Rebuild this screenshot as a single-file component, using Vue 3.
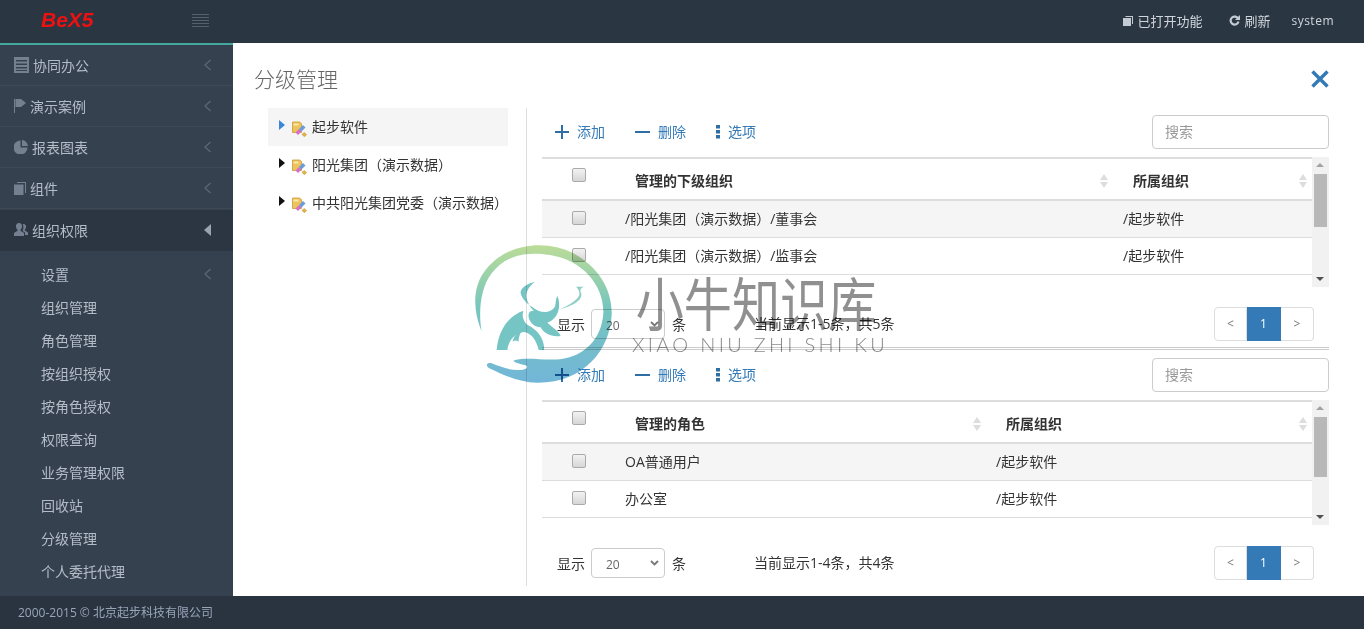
<script setup>
const menus = [
  { name: '协同办公', w: 15, h: 16, box: '0 0 15 16', d: 'M0 0h15v16H0zM2 3v1.500h11V3zM2 6.500V8h11V6.500zM2 10v1.500h11V10zM2 13v1h11v-1z' },
  { name: '演示案例', w: 12, h: 14, box: '0 0 12 14', d: 'M0 0h1v14H0zM1.500 0h5.500l5 4-5 4H1.500z' },
  { name: '报表图表', w: 14, h: 14, box: '0 0 14 14', d: 'M6.500 0.500v7h7a7 7 0 1 1-7-7zM8 0a6.500 6.500 0 0 1 6 6H8z' },
  { name: '组件', w: 12, h: 13, box: '0 0 12 13', d: 'M3 0h9v11h-1V1H3zM0 2.500h9.500V13H0z' },
  { name: '组织权限', w: 14, h: 13, box: '0 0 14 13', d: 'M5 0a3 3 0 0 1 3 3.500c0 1.500-.8 2.700-1.500 3.300v1L10 10v3H0v-3l3.500-2.200v-1C2.800 6.200 2 5 2 3.500A3 3 0 0 1 5 0zM9.500 1a2.500 2.500 0 0 1 2.500 3c0 1.200-.6 2.200-1.200 2.700v.8L14 9.500V12h-3V9.500L8.500 8c.5-.8 1-2.500.8-4.500 0-1-.2-1.800-.6-2.300z', active: true }
]
const subMenus = ['设置', '组织管理', '角色管理', '按组织授权', '按角色授权', '权限查询', '业务管理权限', '回收站', '分级管理', '个人委托代理']
const treeNodes = [
  { name: '起步软件', selected: true },
  { name: '阳光集团（演示数据）' },
  { name: '中共阳光集团党委（演示数据）' }
]
const panels = [
  {
    columns: '73px 498px 1fr',
    title: '管理的下级组织',
    rows: [
      ['/阳光集团（演示数据）/董事会', '/起步软件'],
      ['/阳光集团（演示数据）/监事会', '/起步软件']
    ],
    tableHeight: 130,
    thumb: 53,
    footTop: 20,
    status: '当前显示1-5条，共5条'
  },
  {
    columns: '73px 371px 1fr',
    title: '管理的角色',
    rows: [
      ['OA普通用户', '/起步软件'],
      ['办公室', '/起步软件']
    ],
    tableHeight: 125,
    thumb: 60,
    footTop: 21,
    status: '当前显示1-4条，共4条'
  }
]
</script>

<template>
  <div class="page">
    <header class="topbar">
      <div class="brand">
        <span class="logo">BeX5</span>
        <svg class="burger" width="17" height="14" viewBox="0 0 17 14">
          <path d="M0 .5h17M0 3.500h17M0 6.500h17M0 9.500h17M0 12.500h17" stroke="#56606e" fill="none" />
        </svg>
      </div>
      <nav class="top-actions">
        <span class="top-link">
          <svg width="10" height="10" viewBox="0 0 10 10"><path fill="#c3cad3" d="M2.500 0H10v8H9V1H2.500zM0 2h8v8H0z" /></svg>
          已打开功能
        </span>
        <span class="top-link second">
          <svg width="11" height="11" viewBox="0 0 11 11"><path fill="none" stroke="#c3cad3" stroke-width="2.200" d="M9.300 4A4 4 0 1 0 9.500 6.500" /><path fill="#c3cad3" d="M11 0v5H6z" /></svg>
          刷新
        </span>
        <span class="user">system</span>
      </nav>
    </header>

    <div class="middle">
      <aside class="sidebar">
        <div v-for="m in menus" :key="m.name" class="menu-item" :class="{ active: m.active }">
          <svg class="menu-icon" :width="m.w" :height="m.h" :viewBox="m.box"><path fill-rule="evenodd" :d="m.d" /></svg>
          <span class="menu-text">{{ m.name }}</span>
          <svg v-if="m.active" class="chev" width="7" height="12" viewBox="0 0 7 12"><path fill="#9aa4b0" d="M7 0v12L0 6z" /></svg>
          <svg v-else class="chev" width="7" height="12" viewBox="0 0 7 12"><path fill="none" stroke="#5d6977" stroke-width="1.200" d="M6.500 1 1 6l5.500 5" /></svg>
        </div>
        <div class="submenu">
          <div v-for="(s, i) in subMenus" :key="s" class="sub-item">
            <span>{{ s }}</span>
            <svg v-if="i === 0" class="chev" width="7" height="12" viewBox="0 0 7 12"><path fill="none" stroke="#5d6977" stroke-width="1.200" d="M6.500 1 1 6l5.500 5" /></svg>
          </div>
        </div>
      </aside>

      <main class="content">
        <div class="title-row">
          <h1 class="title">分级管理</h1>
          <svg width="18" height="18" viewBox="0 0 18 18"><path d="M1.500 1.500l15 15M16.500 1.500l-15 15" stroke="#337ab7" stroke-width="3.400" fill="none" /></svg>
        </div>

        <div class="workspace">
          <ul class="tree">
            <li v-for="n in treeNodes" :key="n.name" class="tree-node" :class="{ selected: n.selected }">
              <svg class="arrow" width="6" height="10" viewBox="0 0 6 10"><path d="M0 0l6 5-6 5z" /></svg>
              <svg class="tree-icon" width="15" height="16" viewBox="0 0 15 16">
                <path fill="#eec25c" stroke="#c99a35" stroke-width=".8" d="M.5 1h7l2 1.500V11.500H.5z" />
                <path fill="#fbe9a8" d="M1.500 2.500h5v2h-5z" />
                <path fill="#d76fc6" d="M3.500 11.500 7 8l2.500 2.500L6 14z" />
                <path fill="#6d9ad8" d="M7 8l4-4 2.500 2.500-4 4z" />
                <path fill="#e6b13c" stroke="#b98a28" stroke-width=".5" d="M10 13.500l2-2 2.500 2-2 2.300z" />
              </svg>
              <span>{{ n.name }}</span>
            </li>
          </ul>

          <div class="grids">
            <section v-for="(p, pi) in panels" :key="p.title" class="panel">
              <div class="toolbar">
                <a class="tool">
                  <svg width="14" height="14" viewBox="0 0 14 14"><path d="M7 0v14M0 7h14" stroke="#2f6ea5" stroke-width="2" fill="none" /></svg>
                  <span>添加</span>
                </a>
                <a class="tool">
                  <svg width="15" height="14" viewBox="0 0 15 14"><path d="M0 7h15" stroke="#2f6ea5" stroke-width="2" fill="none" /></svg>
                  <span>删除</span>
                </a>
                <a class="tool">
                  <svg width="4" height="14" viewBox="0 0 4 14"><path fill="#2f6ea5" d="M0 0h4v3.500H0zM0 5h4v3.500H0zM0 10h4v3.500H0z" /></svg>
                  <span>选项</span>
                </a>
                <div class="search">搜索</div>
              </div>

              <div class="table-wrap" :style="{ height: p.tableHeight + 'px' }">
                <div class="table">
                  <div class="thead" :style="{ gridTemplateColumns: p.columns }">
                    <div class="cell-check head-check"><i class="check"></i></div>
                    <div class="th">
                      <span>{{ p.title }}</span>
                      <i class="sort"></i>
                    </div>
                    <div class="th">
                      <span>所属组织</span>
                      <i class="sort"></i>
                    </div>
                  </div>
                  <div v-for="(r, ri) in p.rows" :key="r[0]" class="tr" :class="{ odd: ri === 0 }" :style="{ gridTemplateColumns: p.columns }">
                    <div class="cell-check"><i class="check"></i></div>
                    <div class="td">{{ r[0] }}</div>
                    <div class="td">{{ r[1] }}</div>
                  </div>
                </div>
                <div class="scrollbar">
                  <i class="sb-up"></i>
                  <div class="sb-thumb" :style="{ height: p.thumb + 'px' }"></div>
                  <i class="sb-down"></i>
                </div>
              </div>

              <div class="grid-foot" :style="{ paddingTop: p.footTop + 'px' }">
                <span>显示</span>
                <div class="select">
                  <span>20</span>
                  <svg width="9" height="6" viewBox="0 0 9 6"><path d="M1 1 4.500 4.500 8 1" stroke="#777" stroke-width="1.800" fill="none" /></svg>
                </div>
                <span>条</span>
                <span class="status">{{ p.status }}</span>
                <div class="pager">
                  <span class="pg">&lt;</span>
                  <span class="pg on">1</span>
                  <span class="pg">&gt;</span>
                </div>
              </div>
              <div v-if="pi === 0" class="divider"></div>
            </section>
          </div>
        </div>
      </main>
    </div>

    <footer class="footer">2000-2015 © 北京起步科技有限公司</footer>

    <div class="watermark">
      <svg width="150" height="150" viewBox="0 0 450 450">
        <defs>
          <linearGradient id="wm" x1="0" y1="0" x2="0" y2="1">
            <stop offset="0" stop-color="#bcdc98" />
            <stop offset=".45" stop-color="#77c6bd" />
            <stop offset="1" stop-color="#72b6d8" />
          </linearGradient>
        </defs>
        <path fill="url(#wm)" d="M35 275C5 200 5 120 70 65 130 10 235 0 310 40c75 40 118 110 115 185-5 105-85 205-225 203-50 0-100-23-142-43-13-7-8-20 7-15 25 10 55 22 85 20 20-2 28-10 15-15-15-3-30-7-35-13 30-12 90 0 140-4 70-8 125-58 130-138 3-80-60-160-160-175C150 32 100 55 65 100 30 145 25 220 35 275z" />
        <path fill="#76c5c5" d="M195 125C168 132 150 145 152 160C156 180 180 200 205 212C225 220 245 215 255 200C258 190 256 178 262 168C270 185 270 210 258 228C250 240 240 245 232 248C248 262 268 275 272 288C245 292 222 282 212 262C195 262 180 250 176 232C174 218 180 210 192 214C178 200 165 175 170 160C172 148 182 135 195 125Z" />
        <path fill="#76c5c5" d="M160 212C115 228 85 270 80 330L112 330C116 300 135 280 160 276C186 278 200 305 206 330L222 330C225 300 205 270 172 254C160 245 155 228 160 212Z" />
        <path fill="#76c5c5" d="M128 305C130 290 140 278 155 272C148 285 145 295 146 305C140 300 134 300 128 305Z" />
        <path fill="#8fcfc5" d="M318 140L342 140C332 143 328 150 334 160C338 185 300 200 265 210C290 198 320 185 328 165C330 155 325 147 318 140Z" />
      </svg>
      <div class="wm-text">
        <div class="wm-cn">小牛知识库</div>
        <div class="wm-en">XIAO NIU ZHI SHI KU</div>
      </div>
    </div>
  </div>
</template>

<style scoped>
.page {
  position: relative;
  display: flex;
  flex-direction: column;
  height: 629px;
  overflow: hidden;
  font-family: "Open Sans", "Noto Sans CJK SC", sans-serif;
  font-size: 14px;
  color: #333;
  background: #fff;
  text-spacing-trim: space-all;
}

.topbar {
  display: flex;
  justify-content: space-between;
  align-items: center;
  height: 43px;
  flex: none;
  background: #2b3643;
}

.brand {
  display: flex;
  align-items: center;
  width: 233px;
  padding-left: 41px;
  box-sizing: border-box;
}

.logo {
  width: 151px;
  font-family: "Liberation Sans", sans-serif;
  font-size: 21px;
  font-weight: bold;
  font-style: italic;
  color: #ee1111;
  margin-top: -4px;
}

.burger {
  margin-top: -1px;
}

.top-actions {
  display: flex;
  align-items: center;
  padding-right: 30px;
  padding-bottom: 2px;
  color: #d0d5dc;
  font-size: 13px;
}

.top-link {
  display: flex;
  align-items: center;
  gap: 4px;
}

.second {
  margin-left: 27px;
}

.user {
  margin-left: 21px;
  font-size: 12px;
  letter-spacing: .5px;
}

.middle {
  display: flex;
  flex: 1;
  min-height: 0;
}

.sidebar {
  width: 233px;
  flex: none;
  background: #364150;
  border-top: 2px solid #44a89f;
  box-sizing: border-box;
  color: #b4bcc8;
}

.menu-item {
  display: flex;
  align-items: center;
  height: 40px;
  padding: 0 22px 0 14px;
  border-bottom: 1px solid #3d4957;
}

.menu-item.active {
  height: 41px;
  box-sizing: border-box;
  padding-bottom: 2px;
  margin-top: 1px;
  background: #2c3542;
  border-bottom: 0;
}

.menu-icon {
  fill: #74808f;
  margin-right: 4px;
  flex: none;
}

.menu-text {
  flex: 1;
}

.submenu {
  padding-top: 6px;
}

.sub-item {
  display: flex;
  justify-content: space-between;
  align-items: center;
  height: 33px;
  padding: 0 22px 0 41px;
}

.footer {
  flex: none;
  height: 33px;
  line-height: 33px;
  padding-left: 18px;
  font-size: 12px;
  color: #98a6ba;
  background: #2a3340;
}

.content {
  flex: 1;
  min-width: 0;
  padding-right: 35px;
  padding-left: 21px;
  box-sizing: border-box;
}

.title-row {
  display: flex;
  justify-content: space-between;
  align-items: center;
  height: 65px;
  padding-top: 9px;
  padding-bottom: 3px;
  box-sizing: border-box;
}

.title {
  margin: 0 0 2px;
  font-size: 21px;
  font-weight: 300;
  color: #666;
}

.workspace {
  display: flex;
  padding-left: 14px;
}

.tree {
  width: 240px;
  flex: none;
  margin: 0;
  padding: 0;
  list-style: none;
}

.tree-node {
  display: flex;
  align-items: center;
  height: 38px;
  box-sizing: border-box;
  padding-left: 11px;
  padding-bottom: 2px;
  white-space: nowrap;
}

.tree-node.selected {
  background: #f5f5f5;
}

.arrow {
  margin-right: 7px;
  margin-top: -2px;
  fill: #111;
}

.selected .arrow {
  fill: #3a87d8;
}

.tree-icon {
  margin-right: 5px;
  margin-top: 6px;
}

.grids {
  flex: 1;
  min-width: 0;
  margin-left: 18px;
  padding-left: 15px;
  height: 478px;
  border-left: 1px solid #ddd;
}

.toolbar {
  display: flex;
  align-items: center;
  box-sizing: border-box;
  height: 49px;
  padding-left: 13px;
  padding-bottom: 1px;
  gap: 30px;
}

.tool {
  display: flex;
  align-items: center;
  gap: 8px;
  color: #337ab7;
}

.tool span {
  margin-bottom: 2px;
}

.search {
  box-sizing: border-box;
  width: 177px;
  height: 34px;
  margin-left: auto;
  padding-left: 12px;
  line-height: 32px;
  color: #999;
  border: 1px solid #ccc;
  border-radius: 4px;
}

.table-wrap {
  display: flex;
}

.table {
  flex: 1;
  min-width: 0;
  border-top: 2px solid #ddd;
  box-sizing: border-box;
}

.thead,
.tr {
  display: grid;
}

.thead {
  height: 42px;
  box-sizing: border-box;
  border-bottom: 2px solid #ddd;
}

.tr {
  height: 37px;
  box-sizing: border-box;
  border-bottom: 1px solid #ddd;
}

.tr.odd {
  background: #f5f5f5;
}

.cell-check {
  display: flex;
  align-items: center;
  padding-left: 30px;
  padding-bottom: 2px;
}

.head-check {
  padding-bottom: 8px;
}

.check {
  display: block;
  width: 12px;
  height: 12px;
  border: 1px solid #aaa;
  border-radius: 2px;
  background: linear-gradient(#f2f2f2, #d6d6d6);
}

.th {
  display: flex;
  align-items: center;
  justify-content: space-between;
  padding: 2px 4px 0 20px;
  font-weight: bold;
}

.td {
  display: flex;
  align-items: center;
  padding-left: 10px;
  padding-bottom: 2px;
  white-space: nowrap;
}

.sort {
  position: relative;
  display: block;
  width: 9px;
  height: 14px;
  margin-top: 2px;
}

.sort::before,
.sort::after {
  content: "";
  position: absolute;
  left: 0;
  border-left: 4.500px solid transparent;
  border-right: 4.500px solid transparent;
}

.sort::before {
  top: 0;
  border-bottom: 6px solid #ddd;
}

.sort::after {
  bottom: 0;
  border-top: 6px solid #ddd;
}

.scrollbar {
  position: relative;
  width: 17px;
  flex: none;
  background: #f1f1f1;
}

.sb-up,
.sb-down {
  position: absolute;
  left: 4px;
  border-left: 4px solid transparent;
  border-right: 4px solid transparent;
}

.sb-up {
  top: 6px;
  border-bottom: 4px solid #a3a3a3;
}

.sb-down {
  bottom: 6px;
  border-top: 4px solid #505050;
}

.sb-thumb {
  margin: 17px 2px 0;
  background: #b8b8b8;
}

.grid-foot {
  display: flex;
  align-items: center;
  padding-left: 15px;
  padding-right: 15px;
}

.select {
  display: flex;
  align-items: center;
  justify-content: space-between;
  box-sizing: border-box;
  width: 74px;
  height: 30px;
  margin: 0 7px 0 6px;
  padding: 2px 5px 0 14px;
  font-size: 12px;
  color: #666;
  border: 1px solid #ccc;
  border-radius: 4px;
}

.select svg {
  margin-top: -3px;
}

.status {
  margin-left: 68px;
  margin-bottom: 2px;
}

.pager {
  display: flex;
  margin-left: auto;
  height: 34px;
  color: #777;
  font-size: 12px;
}

.pg {
  box-sizing: border-box;
  width: 33px;
  line-height: 32px;
  text-align: center;
  border: 1px solid #ddd;
  border-left: 0;
}

.pg:first-child {
  border-left: 1px solid #ddd;
  border-radius: 4px 0 0 4px;
}

.pg:last-child {
  border-radius: 0 4px 4px 0;
}

.pg.on {
  width: 34px;
  color: #fff;
  background: #337ab7;
  border-color: #337ab7;
}

.divider {
  height: 3px;
  margin-top: 6px;
  margin-bottom: 1px;
  box-sizing: border-box;
  border-top: 1px solid #ccc;
  border-bottom: 1px solid #ccc;
}

.watermark {
  position: absolute;
  left: 470px;
  top: 240px;
  display: flex;
  pointer-events: none;
  mix-blend-mode: multiply;
}

.wm-text {
  margin-left: 12px;
  margin-top: 25px;
}

.wm-cn {
  width: 290px;
  margin-left: 3px;
  font-family: "Noto Sans CJK SC", sans-serif;
  font-size: 58px;
  line-height: 72px;
  color: #909090;
  white-space: nowrap;
  transform: scaleX(.83);
  transform-origin: 4px 0;
}

.wm-en {
  margin-top: -5px;
  font-family: "Lato", sans-serif;
  font-weight: 300;
  font-size: 20px;
  line-height: 24px;
  letter-spacing: 3.300px;
  color: #8c8c8c;
  white-space: nowrap;
}
</style>

<style>
html,
body {
  margin: 0;
  background: #fff;
}
</style>
